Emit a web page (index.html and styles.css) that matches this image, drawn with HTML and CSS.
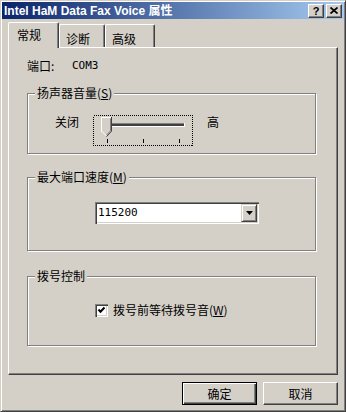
FILE: index.html
```html
<!DOCTYPE html>
<html>
<head lang="zh">
    <meta charset="UTF-8">
    <title>Intel HaM Data Fax Voice 属性</title>
    <link rel="stylesheet" href="styles.css">
</head>
<body>
<div class="window">
    <div class="titlebar">
        <span class="title">Intel HaM Data Fax Voice 属性</span>
        <div class="caption-btns">
            <span class="cap-btn">?</span>
            <span class="cap-btn">
                <svg width="8" height="7" viewBox="0 0 8 7"><path d="M0.5 0.5L7.5 6.5M7.5 0.5L0.5 6.5" stroke="#000" stroke-width="1.7" fill="none"/></svg>
            </span>
        </div>
    </div>
    <div class="client">
        <div class="tabs">
            <div class="tab active">常规</div>
            <div class="tab">诊断</div>
            <div class="tab">高级</div>
        </div>
        <div class="panel">
            <div class="port-row">
                <span class="port-label">端口:</span>
                <span class="latin">COM3</span>
            </div>

            <div class="group group-volume">
                <span class="legend">扬声器音量(<u>S</u>)</span>
                <div class="slider-row">
                    <span class="slider-label">关闭</span>
                    <svg class="slider" width="100" height="31" viewBox="0 0 100 31">
                        <rect x="0.5" y="0.5" width="99" height="30" fill="none" stroke="#000" stroke-dasharray="1 1" shape-rendering="crispEdges"/>
                        <g shape-rendering="crispEdges">
                            <rect x="14" y="8" width="78" height="1" fill="#808080"/>
                            <rect x="15" y="9" width="76" height="2" fill="#404040"/>
                            <rect x="14" y="11" width="78" height="1" fill="#fff"/>
                            <rect x="91" y="8" width="1" height="4" fill="#fff"/>
                            <rect x="14" y="24" width="1" height="4" fill="#000"/>
                            <rect x="50" y="24" width="1" height="4" fill="#000"/>
                            <rect x="86" y="24" width="1" height="4" fill="#000"/>
                        </g>
                        <path d="M8 2H19V16L13.5 21.5L8 16Z" fill="#d4d0c8"/>
                        <path d="M8.5 16.5V2.5H18.5" stroke="#fff" fill="none"/>
                        <path d="M8.5 16L13.5 21" stroke="#fff" fill="none"/>
                        <path d="M18.5 2V16.2L13.5 21.6" stroke="#404040" fill="none"/>
                        <path d="M17.5 3.5V15.8L13.5 20" stroke="#808080" fill="none"/>
                    </svg>
                    <span class="slider-label">高</span>
                </div>
            </div>

            <div class="group group-speed">
                <span class="legend">最大端口速度(<u>M</u>)</span>
                <div class="combo">
                    <span class="combo-value latin">115200</span>
                    <span class="combo-btn">
                        <svg width="7" height="4" viewBox="0 0 7 4"><path d="M0 0H7L3.5 4Z" fill="#000"/></svg>
                    </span>
                </div>
            </div>

            <div class="group group-dial">
                <span class="legend">拨号控制</span>
                <div class="check-row">
                    <span class="checkbox">
                        <svg width="13" height="13" viewBox="0 0 13 13"><path d="M3.5 5.5L5.5 7.8L9.5 3.5" stroke="#000" stroke-width="2" fill="none"/></svg>
                    </span>
                    <span>拨号前等待拨号音(<u>W</u>)</span>
                </div>
            </div>
        </div>
        <div class="buttons">
            <button class="btn btn-default">确定</button>
            <button class="btn">取消</button>
        </div>
    </div>
</div>
</body>
</html>
```

FILE: styles.css
```css
* {
    margin: 0;
    padding: 0;
    box-sizing: border-box;
}

body {
    font: 12px/16px "Noto Sans CJK SC", sans-serif;
    color: #000;
    background: #d4d0c8;
}

.window {
    width: 346px;
    height: 412px;
    padding: 1px;
    background: #d4d0c8;
    border: 1px solid;
    border-color: #d4d0c8 #404040 #404040 #d4d0c8;
    box-shadow: inset 1px 1px #fff, inset -1px -1px #808080;
}

/* title bar */
.titlebar {
    height: 17px;
    display: flex;
    align-items: center;
    padding: 0 2px 0 2px;
    background: linear-gradient(to right, #0a246a, #a6caf0);
}

.title {
    color: #fff;
    font: bold 12px/16px "Liberation Sans", "Noto Sans CJK SC", sans-serif;
}

.caption-btns {
    margin-left: auto;
    display: flex;
    gap: 2px;
}

.cap-btn {
    width: 16px;
    height: 14px;
    display: flex;
    align-items: center;
    justify-content: center;
    background: #d4d0c8;
    border: 1px solid;
    border-color: #fff #404040 #404040 #fff;
    box-shadow: inset -1px -1px #808080;
    font: bold 11px/12px "Liberation Sans", sans-serif;
}

/* client area */
.client {
    padding: 3px 6px 0 6px;
}

.tabs {
    display: flex;
    align-items: flex-end;
    height: 26px;
    margin-bottom: -1px;
    position: relative;
    z-index: 1;
}

.tab {
    height: 23px;
    margin-bottom: 1px;
    padding: 6px 0 0 6px;
    line-height: 16px;
    background: #d4d0c8;
    border-top: 1px solid #fff;
    border-left: 1px solid #fff;
    border-right: 1px solid #404040;
    border-radius: 2px 2px 0 0;
    box-shadow: inset -1px 0 #808080;
}

.tab.active {
    height: 26px;
    margin-bottom: 0;
    padding: 4px 0 0 8px;
}

.tab:nth-child(1) { width: 51px; }
.tab:nth-child(2) { width: 46px; }
.tab:nth-child(3) { width: 50px; }

.panel {
    height: 328px;
    padding: 10px 0 0 18px;
    border: 1px solid;
    border-color: #fff #404040 #404040 #fff;
    box-shadow: inset -1px -1px #808080;
}

.port-row {
    display: flex;
    height: 16px;
}

.port-label {
    width: 45px;
}

.latin {
    font: 11px/16px "DejaVu Sans Mono", monospace;
}

/* group boxes */
.group {
    position: relative;
    width: 289px;
    border: 1px solid #808080;
    box-shadow: inset 1px 1px #fff, 1px 1px #fff;
}

.legend {
    position: absolute;
    top: -9px;
    left: 7px;
    padding: 0 2px;
    background: #d4d0c8;
    line-height: 16px;
}

.group-volume {
    margin-top: 19px;
    height: 61px;
    padding: 20px 0 0 27px;
}

.group-speed {
    margin-top: 23px;
    height: 74px;
    padding: 24px 0 0 67px;
}

.group-dial {
    margin-top: 25px;
    height: 70px;
    padding: 25px 0 0 67px;
}

.slider-row {
    display: flex;
    align-items: flex-start;
    gap: 14px;
}

.slider {
    display: block;
    margin-top: 1px;
}

.combo {
    width: 164px;
    height: 22px;
    display: flex;
    align-items: center;
    padding: 2px;
    background: #fff;
    box-shadow: inset 1px 1px #808080, inset 2px 2px #404040, inset -1px -1px #fff, inset -2px -2px #d4d0c8;
}

.combo-value {
    flex: 1;
    padding-left: 1px;
}

.combo-btn {
    width: 16px;
    height: 18px;
    display: flex;
    align-items: center;
    justify-content: center;
    background: #d4d0c8;
    border: 1px solid;
    border-color: #d4d0c8 #404040 #404040 #d4d0c8;
    box-shadow: inset 1px 1px #fff, inset -1px -1px #808080;
}

.combo-btn svg {
    display: block;
}

.check-row {
    display: flex;
    align-items: center;
    gap: 5px;
}

.checkbox {
    width: 13px;
    height: 13px;
    background: #fff;
    box-shadow: inset 1px 1px #808080, inset 2px 2px #404040, inset -1px -1px #fff, inset -2px -2px #d4d0c8;
}

.checkbox svg {
    display: block;
}

/* dialog buttons */
.buttons {
    display: flex;
    justify-content: flex-end;
    gap: 6px;
    margin-top: 7px;
}

.btn {
    width: 75px;
    height: 23px;
    font: 12px/16px "Noto Sans CJK SC", sans-serif;
    color: #000;
    background: #d4d0c8;
    border: 1px solid;
    border-color: #fff #404040 #404040 #fff;
    box-shadow: inset -1px -1px #808080;
}

.btn-default {
    border-color: #000;
    box-shadow: inset 1px 1px #fff, inset -1px -1px #404040, inset -2px -2px #808080;
}
```
